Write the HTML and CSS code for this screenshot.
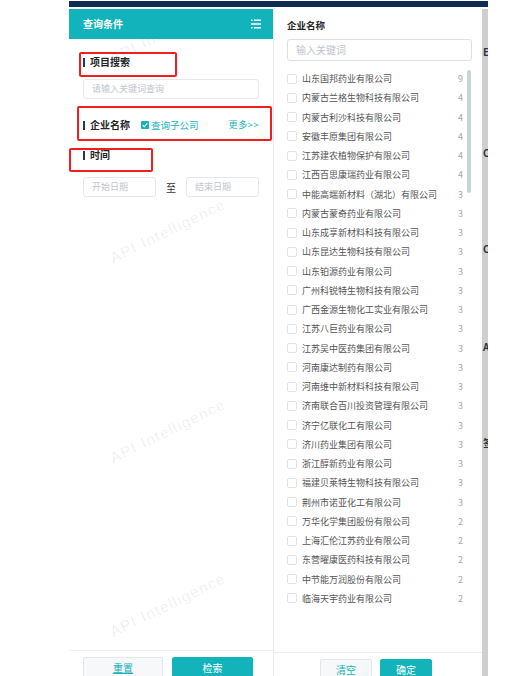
FILE: index.html
```html
<!DOCTYPE html>
<html lang="zh-CN">
<head>
<meta charset="utf-8">
<title>查询条件</title>
<link rel="stylesheet" href="styles.css">
</head>
<body>
<div class="page">
  <div class="app">
    <div class="topbar"></div>
    <div class="main">
      <section class="left">
        <div class="lhead">
          <span class="ltitle">查询条件</span>
          <svg class="menu" width="10" height="10" viewBox="0 0 10 10">
            <path d="M0 1.2H1.5M3 1.2H10M0 5H10M0 8.8H1.5M3 8.8H10" stroke="#fff" stroke-width="1.4"/>
          </svg>
        </div>
        <div class="lbody">
          <div class="sec-title">项目搜索</div>
          <div class="input">请输入关键词查询</div>
          <div class="row2">
            <span class="sec-title">企业名称</span>
            <span class="chk"><span class="cbox"><svg width="8" height="8" viewBox="0 0 8 8"><path d="M1.6 4.1L3.3 5.7L6.4 2.4" fill="none" stroke="#fff" stroke-width="1.1"/></svg></span>查询子公司</span>
            <span class="more">更多&gt;&gt;</span>
          </div>
          <div class="sec-title t3">时间</div>
          <div class="dates">
            <div class="input">开始日期</div>
            <span class="to">至</span>
            <div class="input">结束日期</div>
          </div>
        </div>
        <div class="lfoot">
          <button class="btn ghost">重置</button>
          <button class="btn primary">检索</button>
        </div>
        <div class="wm w0">API Intelligence</div>
        <div class="wm w1">API Intelligence</div>
        <div class="wm w2">API Intelligence</div>
        <div class="wm w3">API Intelligence</div>
      </section>
      <section class="right">
        <div class="rtitle">企业名称</div>
        <div class="rsearch">输入关键词</div>
        <div class="list">
          <div class="item"><span class="box"></span><span class="name">山东国邦药业有限公司</span><span class="num">9</span></div>
          <div class="item"><span class="box"></span><span class="name">内蒙古兰格生物科技有限公司</span><span class="num">4</span></div>
          <div class="item"><span class="box"></span><span class="name">内蒙古利沙科技有限公司</span><span class="num">4</span></div>
          <div class="item"><span class="box"></span><span class="name">安徽丰原集团有限公司</span><span class="num">4</span></div>
          <div class="item"><span class="box"></span><span class="name">江苏建农植物保护有限公司</span><span class="num">4</span></div>
          <div class="item"><span class="box"></span><span class="name">江西百思康瑞药业有限公司</span><span class="num">4</span></div>
          <div class="item"><span class="box"></span><span class="name">中能高端新材料（湖北）有限公司</span><span class="num">3</span></div>
          <div class="item"><span class="box"></span><span class="name">内蒙古蒙奇药业有限公司</span><span class="num">3</span></div>
          <div class="item"><span class="box"></span><span class="name">山东成享新材料科技有限公司</span><span class="num">3</span></div>
          <div class="item"><span class="box"></span><span class="name">山东昆达生物科技有限公司</span><span class="num">3</span></div>
          <div class="item"><span class="box"></span><span class="name">山东铂源药业有限公司</span><span class="num">3</span></div>
          <div class="item"><span class="box"></span><span class="name">广州科锐特生物科技有限公司</span><span class="num">3</span></div>
          <div class="item"><span class="box"></span><span class="name">广西金源生物化工实业有限公司</span><span class="num">3</span></div>
          <div class="item"><span class="box"></span><span class="name">江苏八巨药业有限公司</span><span class="num">3</span></div>
          <div class="item"><span class="box"></span><span class="name">江苏吴中医药集团有限公司</span><span class="num">3</span></div>
          <div class="item"><span class="box"></span><span class="name">河南康达制药有限公司</span><span class="num">3</span></div>
          <div class="item"><span class="box"></span><span class="name">河南维中新材料科技有限公司</span><span class="num">3</span></div>
          <div class="item"><span class="box"></span><span class="name">济南联合百川投资管理有限公司</span><span class="num">3</span></div>
          <div class="item"><span class="box"></span><span class="name">济宁亿联化工有限公司</span><span class="num">3</span></div>
          <div class="item"><span class="box"></span><span class="name">济川药业集团有限公司</span><span class="num">3</span></div>
          <div class="item"><span class="box"></span><span class="name">浙江醇新药业有限公司</span><span class="num">3</span></div>
          <div class="item"><span class="box"></span><span class="name">福建贝莱特生物科技有限公司</span><span class="num">3</span></div>
          <div class="item"><span class="box"></span><span class="name">荆州市诺亚化工有限公司</span><span class="num">3</span></div>
          <div class="item"><span class="box"></span><span class="name">万华化学集团股份有限公司</span><span class="num">2</span></div>
          <div class="item"><span class="box"></span><span class="name">上海汇伦江苏药业有限公司</span><span class="num">2</span></div>
          <div class="item"><span class="box"></span><span class="name">东营曜康医药科技有限公司</span><span class="num">2</span></div>
          <div class="item"><span class="box"></span><span class="name">中节能万润股份有限公司</span><span class="num">2</span></div>
          <div class="item"><span class="box"></span><span class="name">临海天宇药业有限公司</span><span class="num">2</span></div>
          <div class="thumb"></div>
        </div>
        <div class="rfoot">
          <button class="btn ghost sm">清空</button>
          <button class="btn primary sm">确定</button>
        </div>
      </section>
      <div class="strip">
        <span class="frag f1">E</span>
        <span class="frag f2">C</span>
        <span class="frag f3">C</span>
        <span class="frag f4">A</span>
        <span class="frag f5">签</span>
      </div>
    </div>
  </div>
  <div class="redbox r1"></div>
  <div class="redbox r2"></div>
  <div class="redbox r3"></div>
</div>
</body>
</html>
```

FILE: styles.css
```css
html, body {
  margin: 0;
  padding: 0;
  background: #fff;
  overflow: hidden;
}
body {
  font-family: "Noto Sans CJK SC", "Noto Sans", sans-serif;
  color: #333;
}
.page {
  position: relative;
  width: 532px;
  height: 676px;
  overflow: hidden;
  padding-left: 69px;
  box-sizing: border-box;
}
.app {
  width: 419px;
  height: 676px;
  display: flex;
  flex-direction: column;
}
.topbar {
  height: 6px;
  margin-top: 1px;
  margin-bottom: 2px;
  background: #0f2d53;
  flex: none;
}
.main {
  flex: 1;
  display: flex;
  min-height: 0;
}

/* left panel */
.left {
  width: 204px;
  border-right: 1px solid #e9ebee;
  display: flex;
  flex-direction: column;
  position: relative;
  overflow: hidden;
  flex: none;
}
.lhead {
  height: 30px;
  flex: none;
  background: #13b3bb;
  display: flex;
  align-items: center;
  justify-content: space-between;
  padding: 0 12px 0 14px;
  position: relative;
  z-index: 3;
}
.ltitle {
  color: #fff;
  font-size: 10px;
  font-weight: 700;
  line-height: 12px;
}
.menu { display: block; }
.lbody {
  flex: 1;
  padding: 0 14px;
  position: relative;
  z-index: 2;
}
.sec-title {
  display: flex;
  align-items: center;
  gap: 5px;
  height: 12px;
  line-height: 12px;
  font-size: 10px;
  font-weight: 700;
  color: #262626;
  margin-top: 17px;
  white-space: nowrap;
}
.sec-title::before {
  content: "";
  width: 2px;
  height: 9px;
  background: #1d3b5f;
}
.input {
  height: 20px;
  margin-top: 11px;
  border: 1px solid #e4e7ec;
  border-radius: 3px;
  box-sizing: border-box;
  padding-left: 8px;
  font-size: 9px;
  line-height: 18px;
  color: #c2c6cc;
  background: #fff;
}
.row2 {
  display: flex;
  align-items: center;
  height: 12px;
  margin-top: 20px;
}
.row2 .sec-title { margin-top: 0; }
.chk {
  display: flex;
  align-items: center;
  gap: 2px;
  margin-left: 11px;
  font-size: 9.5px;
  line-height: 12px;
  color: #13b3bb;
}
.cbox {
  width: 8px;
  height: 8px;
  background: #13b3bb;
  border-radius: 1px;
  display: flex;
}
.more {
  margin-left: auto;
  font-size: 9px;
  line-height: 12px;
  color: #13b3bb;
  letter-spacing: 0.6px;
}
.t3 { margin-top: 18px; }
.dates {
  display: flex;
  align-items: center;
  margin-top: 16px;
}
.dates .input {
  flex: 1;
  margin-top: 0;
}
.to {
  width: 30px;
  text-align: center;
  font-size: 10px;
  color: #333;
}
.lfoot {
  flex: none;
  height: 26px;
  box-sizing: border-box;
  border-top: 1px solid #eceef1;
  display: flex;
  gap: 9px;
  padding: 6px 0 0 14px;
  position: relative;
  z-index: 2;
}
.btn {
  height: 22px;
  width: 80px;
  padding: 0;
  margin: 0;
  border-radius: 2px;
  font-family: "Noto Sans CJK SC", sans-serif;
  font-size: 10px;
  line-height: 20px;
  flex: none;
}
.btn.ghost {
  background: #f7f8fa;
  border: 1px solid #e3e6eb;
  color: #13b3bb;
  text-decoration: underline;
}
.btn.primary {
  width: 81px;
  background: #13b3bb;
  border: 1px solid #13b3bb;
  color: #fff;
}
.btn.sm { width: 52px; }
.rfoot .btn.ghost { text-decoration: none; }

/* watermarks */
.wm {
  position: absolute;
  left: 34px;
  width: 130px;
  text-align: center;
  font-family: "Liberation Sans", sans-serif;
  font-size: 15px;
  letter-spacing: 1.4px;
  line-height: 18px;
  color: rgba(0, 0, 0, 0.075);
  transform: rotate(-26deg);
  white-space: nowrap;
  pointer-events: none;
  z-index: 1;
}
.w0 { top: 13px; }
.w1 { top: 213px; }
.w2 { top: 413px; }
.w3 { top: 587px; }

/* right panel */
.right {
  width: 208px;
  flex: none;
  display: flex;
  flex-direction: column;
  padding: 0 10px 0 13px;
  box-sizing: border-box;
}
.rtitle {
  margin-top: 10px;
  height: 12px;
  line-height: 12px;
  font-size: 9.5px;
  font-weight: 700;
  color: #262626;
}
.rsearch {
  margin-top: 8px;
  height: 22px;
  box-sizing: border-box;
  border: 1px solid #dcdfe6;
  border-radius: 3px;
  padding-left: 8px;
  font-size: 10px;
  line-height: 20px;
  color: #c0c4cc;
}
.list {
  flex: 1;
  min-height: 0;
  margin-top: 8px;
  position: relative;
}
.item {
  height: 19.25px;
  display: flex;
  align-items: center;
  font-size: 9px;
  color: #555;
  white-space: nowrap;
}
.box {
  width: 10px;
  height: 10px;
  box-sizing: border-box;
  border: 1px solid #dfe2e7;
  border-radius: 2px;
  margin-right: 5px;
  flex: none;
}
.name { flex: 1; }
.num {
  color: #a8a8a8;
  margin-right: 9px;
}
.thumb {
  position: absolute;
  right: 1px;
  top: 1px;
  width: 4px;
  height: 123px;
  border-radius: 2px;
  background: #c9d5d5;
}
.rfoot {
  flex: none;
  height: 24px;
  box-sizing: border-box;
  margin: 0 -10px 0 -13px;
  border-top: 1px solid #eceef1;
  display: flex;
  gap: 8px;
  padding: 6px 0 0 46px;
}

/* page edge behind the drawer */
.strip {
  width: 6px;
  flex: none;
  background: #cfcfcf;
  position: relative;
  overflow: hidden;
}
.frag {
  position: absolute;
  left: 1px;
  font-size: 10px;
  font-weight: 700;
  line-height: 12px;
  color: #2e3440;
}
.f1 { top: 37px; }
.f2 { top: 138px; }
.f3 { top: 234px; }
.f4 { top: 332px; }
.f5 { top: 428px; }

/* annotation boxes */
.redbox {
  position: absolute;
  border: 2px solid #f2201c;
  border-radius: 2px;
  box-sizing: border-box;
  pointer-events: none;
}
.r1 { left: 79px; top: 52px; width: 98px; height: 25px; }
.r2 { left: 77px; top: 106px; width: 195px; height: 35px; }
.r3 { left: 69px; top: 148px; width: 84px; height: 24px; }
```
